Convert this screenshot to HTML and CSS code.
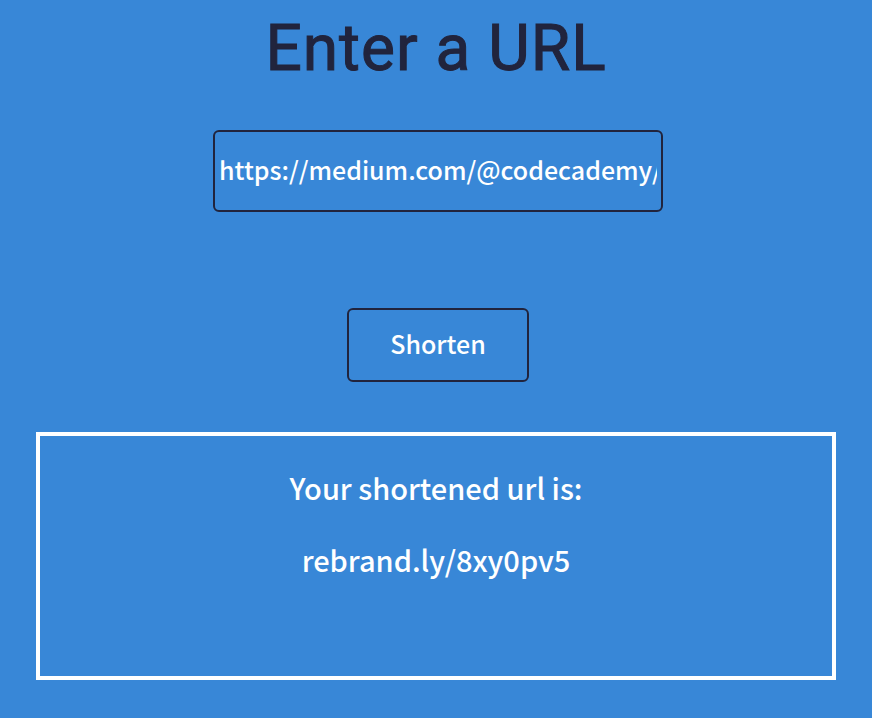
FILE: index.html
```html
<!DOCTYPE html>
<html lang="en">
<head>
<meta charset="utf-8">
<title>URL Shortener</title>
<link rel="stylesheet" href="styles.css">
</head>
<body>
<main class="page">
  <h1 class="title"><label for="url">Enter a URL</label></h1>
  <form class="form">
    <input class="url" id="url" type="text" value="https://medium.com/@codecademy/">
    <button class="shorten" type="button">Shorten</button>
  </form>
  <section class="result">
    <p>Your shortened url is:</p>
    <p>rebrand.ly/8xy0pv5</p>
  </section>
</main>
</body>
</html>
```
FILE: styles.css
```css
* {
  box-sizing: border-box;
}

body {
  margin: 0;
  background: #3887d7;
  color: #fff;
  font-family: "Noto Sans CJK SC", "Noto Sans", sans-serif;
  font-weight: 500;
}

.page {
  padding: 8px 36px 38px;
}

.title {
  margin: 0;
  color: #21243d;
  font: 400 64px/82px Roboto, sans-serif;
  letter-spacing: 1px;
  text-align: center;
  -webkit-text-stroke: 1px #21243d;
}

.form {
  display: flex;
  flex-direction: column;
  align-items: center;
  margin-top: 40px;
  padding-left: 4px;
}

.url,
.shorten {
  border: 2px solid #21243d;
  border-radius: 6px;
  background: transparent;
  color: #fff;
  font: inherit;
  font-size: 25px;
}

.url {
  width: 450px;
  max-width: 100%;
  height: 82px;
  padding: 0 4px 4px;
}

.shorten {
  width: 182px;
  height: 74px;
  margin-top: 96px;
  padding: 0 4px 4px;
}

.result {
  min-height: 248px;
  margin-top: 50px;
  padding: 29px 16px;
  border: 4px solid #fff;
  font-size: 29px;
  line-height: 44px;
  text-align: center;
}

.result p {
  margin: 0 0 28px;
}
```
